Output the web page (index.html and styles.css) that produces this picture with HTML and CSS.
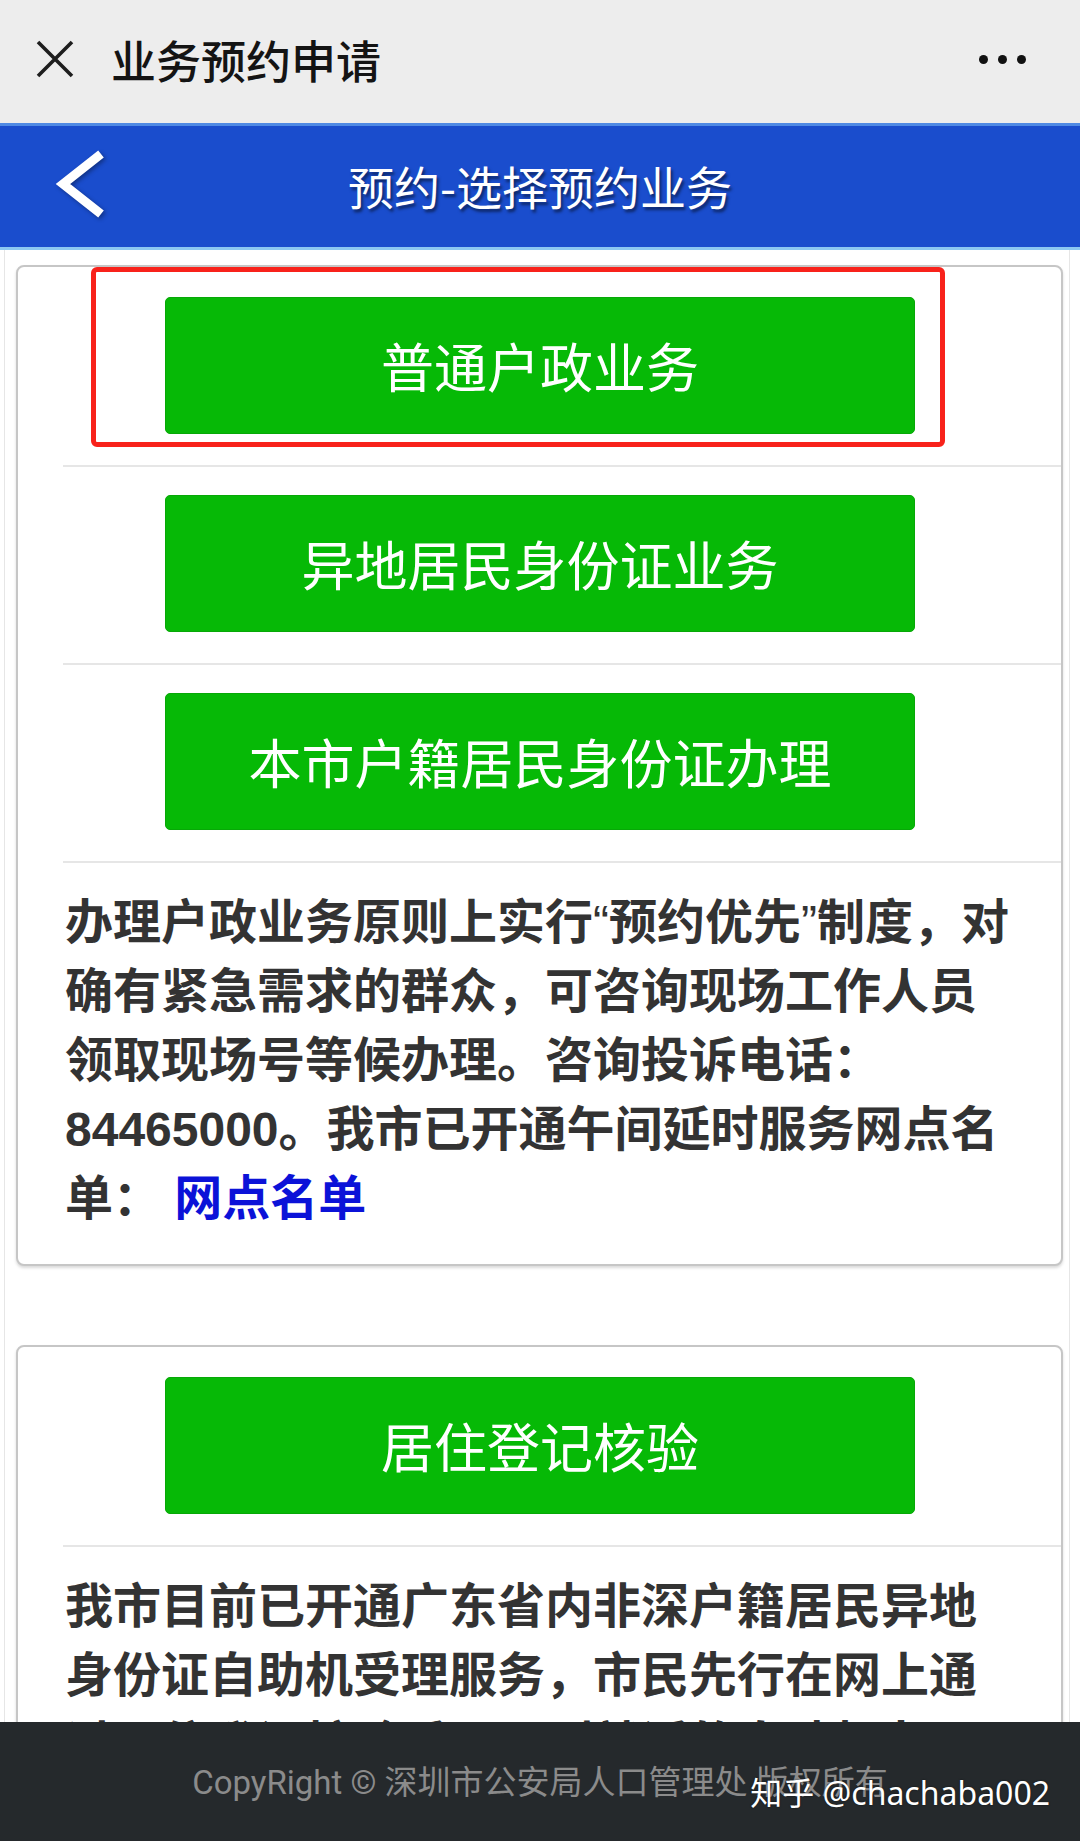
FILE: index.html
```html
<!DOCTYPE html>
<html lang="zh-CN">
<head>
<meta charset="utf-8">
<title>业务预约申请</title>
<link rel="stylesheet" href="styles.css">
</head>
<body>
<div class="topbar">
  <svg class="close" width="38" height="38" viewBox="0 0 38 38"><path d="M2 2L36 36M36 2L2 36" stroke="#1e1e1e" stroke-width="3.6" fill="none"/></svg>
  <div class="top-title">业务预约申请</div>
  <div class="more"><span></span><span></span><span></span></div>
</div>
<header class="header">
  <div class="header-left">
    <svg class="back" width="56" height="72" viewBox="0 0 56 72"><polyline points="47,6 9,36 47,66" fill="none" stroke="#ffffff" stroke-width="9" stroke-linejoin="miter"/></svg>
  </div>
  <h1 class="header-title">预约-选择预约业务</h1>
  <div></div>
</header>
<main class="page">
  <section class="card">
    <div class="row">
      <a class="btn">普通户政业务</a>
      <div class="mark"></div>
    </div>
    <div class="row">
      <a class="btn">异地居民身份证业务</a>
    </div>
    <div class="row">
      <a class="btn">本市户籍居民身份证办理</a>
    </div>
    <p class="note">办理户政业务原则上实行<span class="q">“</span>预约优先<span class="q">”</span>制度，对确有紧急需求的群众，可咨询现场工作人员领取现场号等候办理。咨询投诉电话：84465000。我市已开通午间延时服务网点名单： <a class="link">网点名单</a></p>
  </section>
  <section class="card">
    <div class="row">
      <a class="btn">居住登记核验</a>
    </div>
    <p class="note">我市目前已开通广东省内非深户籍居民异地身份证自助机受理服务，市民先行在网上通过居住登记核验后，可到就近的自助机办理异地身份证业务。</p>
  </section>
</main>
<footer class="footer">
  <div class="copy">CopyRight © 深圳市公安局人口管理处 版权所有</div>
  <div class="wm">知乎 @chachaba002</div>
</footer>
</body>
</html>
```
FILE: styles.css
```css
html, body {
  margin: 0;
  padding: 0;
}
body {
  background: #ffffff;
  font-family: "Noto Sans CJK SC", sans-serif;
  color: #333333;
}

/* top WeChat-like bar */
.topbar {
  height: 123px;
  box-sizing: border-box;
  padding: 0 0 5px 36px;
  background: #ededed;
  display: flex;
  align-items: center;
}
.close {
  display: block;
  flex: none;
}
.top-title {
  margin-left: 37px;
  font-size: 45px;
  font-weight: 500;
  color: #141414;
  line-height: 1;
}
.more {
  margin-left: auto;
  margin-right: 54px;
  display: flex;
  gap: 10px;
}
.more span {
  width: 9px;
  height: 9px;
  border-radius: 50%;
  background: #111111;
}

/* blue header */
.header {
  height: 127px;
  box-sizing: border-box;
  background: #1a4dcd;
  border-top: 3px solid #4f8ae4;
  border-bottom: 3px solid #8cc8f2;
  display: grid;
  grid-template-columns: 1fr auto 1fr;
  align-items: center;
}
.header-left {
  padding-left: 54px;
  display: flex;
  align-items: center;
}
.back {
  display: block;
  filter: drop-shadow(2px 2px 2px rgba(0,0,0,0.35));
  margin-top: -6px;
}
.header-title {
  margin: 0;
  font-size: 46px;
  font-weight: 400;
  color: #ffffff;
  line-height: 1;
  text-shadow: 2px 3px 3px rgba(0,0,0,0.5);
  margin-top: -4px;
}

/* content */
.page {
  margin: 0 10px 0 4px;
  border-left: 1px solid #e6e6e6;
  border-right: 1px solid #e6e6e6;
  padding: 15px 6px 220px 11px;
}
.card {
  background: #ffffff;
  border: 2px solid #c6c6c6;
  border-radius: 8px;
  box-shadow: 0 2px 3px rgba(0,0,0,0.15);
}
.card + .card {
  margin-top: 79px;
}
.row {
  position: relative;
  margin-left: 45px;
  padding: 28px 0 31px;
  border-bottom: 2px solid #e6e6e6;
}
.row:first-child {
  padding-top: 30px;
}
.btn {
  display: flex;
  align-items: center;
  justify-content: center;
  box-sizing: border-box;
  width: 750px;
  height: 137px;
  margin-left: 102px;
  background: #06b906;
  border: 1px solid #07a807;
  border-radius: 5px;
  color: #ffffff;
  font-size: 53px;
  font-weight: 400;
  text-decoration: none;
  line-height: 1;
}
.mark {
  position: absolute;
  left: 28px;
  top: 0;
  width: 854px;
  height: 180px;
  box-sizing: border-box;
  border: 5px solid #f8221b;
  border-radius: 6px;
}
.note {
  margin: 0 0 0 45px;
  padding: 25px 42px 31px 2px;
  font-family: "Liberation Sans", "Noto Sans CJK SC", sans-serif;
  font-size: 48px;
  line-height: 69px;
  font-weight: 700;
  color: #333333;
}
.q {
  font-weight: 400;
}
.link {
  color: #0b12d8;
  text-decoration: none;
}

/* footer */
.footer {
  position: fixed;
  left: 0;
  right: 0;
  bottom: 0;
  height: 119px;
  background: #25292c;
  display: flex;
  align-items: center;
  justify-content: center;
}
.copy {
  font-family: Roboto, "Noto Sans CJK SC", sans-serif;
  font-size: 33px;
  color: #8b8b8b;
  margin-top: -4px;
}
.wm {
  position: absolute;
  right: 30px;
  top: 50px;
  font-family: "Noto Sans", "Noto Sans CJK SC", sans-serif;
  font-size: 32px;
  line-height: 42px;
  color: #ffffff;
  text-shadow: 0 0 2px rgba(0,0,0,0.6);
}
```
